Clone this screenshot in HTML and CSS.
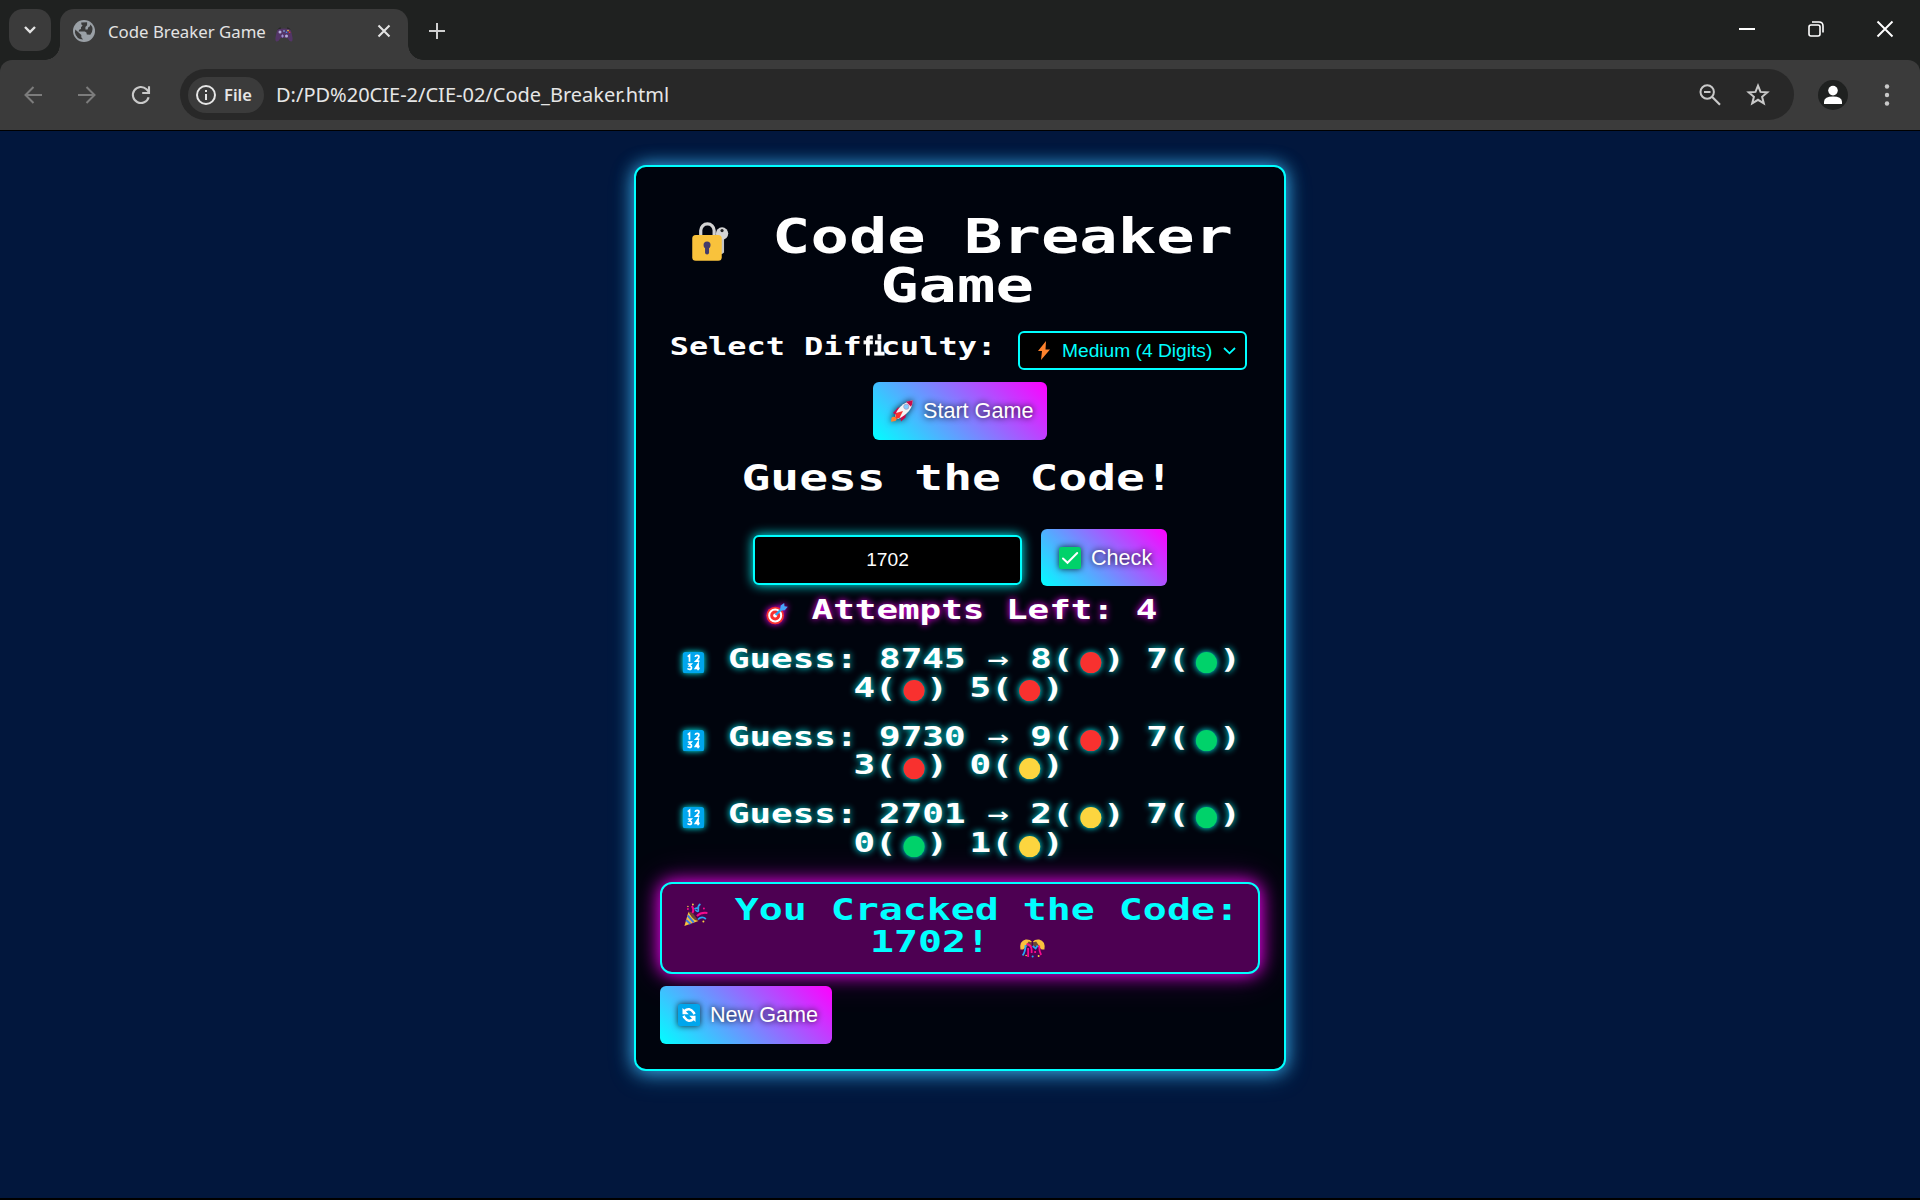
FILE: index.html
```html
<!DOCTYPE html>
<html lang="en">
<head>
<meta charset="utf-8">
<title>Code Breaker Game</title>
<link rel="stylesheet" href="styles.css">
</head>
<body>
<svg class="defs" width="0" height="0">
  <symbol id="red" viewBox="0 0 29.6 21.3" preserveAspectRatio="none"><circle cx="15" cy="10.65" r="10.6" fill="#f8312f"/></symbol>
  <symbol id="green" viewBox="0 0 29.6 21.3" preserveAspectRatio="none"><circle cx="15" cy="10.65" r="10.6" fill="#00d26a"/></symbol>
  <symbol id="yellow" viewBox="0 0 29.6 21.3" preserveAspectRatio="none"><circle cx="15" cy="10.65" r="10.6" fill="#fcd53f"/></symbol>
  <symbol id="numbers" viewBox="0 0 29.6 21.3" preserveAspectRatio="none">
    <rect x="4.3" width="21.3" height="21.3" rx="2.6" fill="#00a6ed"/>
    <g fill="none" stroke="#fff" stroke-width="1.7"><path d="M9.2 4.6 11 3.2v6.600M16.700 4.800q.3-1.400 1.900-1.400 1.900 0 1.900 1.600 0 1-1.600 2.600l-1.500 1.500h3.500M9.300 12h3.400l-1.700 2q2 0 2 1.700t-2 1.700q-1.400 0-1.900-1M19.600 18.200v-6l-2.700 4.200h4.300"/></g>
  </symbol>
</svg>

<header class="browser">
  <div class="tabstrip">
    <button class="tab-search"><svg width="14" height="10" viewBox="0 0 14 10"><path d="M2 2l5 5 5-5" fill="none" stroke="#e3e3e3" stroke-width="2.4"/></svg></button>
    <div class="tab">
      <svg class="globe" width="22" height="22" viewBox="0 0 22 22"><circle cx="11" cy="11" r="11" fill="#9aa0a6"/><path d="M2.3 9.5l6 5.5v2.2l1.8 2.3q-7-.5-8.2-7zM8.2 2.6q-.3 2.3 1.400 3L8 7.200v1.900q-2.600.3-2.400 2.400h6.200q2.200.4 2 3l3.500.2q4.500-6 .2-10.300-.4 2.500-2.200 2.900l-.7 2.200-2.200-.1V6.900l1.700-1.600V2.200z" fill="#3b3b3b"/></svg>
      <span class="tab-title">Code Breaker Game</span>
      <svg class="pad" width="18" height="15" viewBox="0 0 18 15"><path d="M3.5 2Q9 .8 14.500 2 16 2.300 17 8q1.400 6-.5 6.500-2 .3-4.100-3.500H5.600Q3.500 14.800 1.500 14.500-.4 14 1 8q1-5.700 2.500-6z" fill="#533566"/><path d="M3 2.500q.8-1.700 3-1.500M15 2.500q-.8-1.700-3-1.500" stroke="#222" fill="none"/><circle cx="5" cy="5" r="1.500" fill="#b4acd8"/><circle cx="11.500" cy="9" r="1.500" fill="#b4acd8"/><path d="M7.500 7.500v3M6 9h3" stroke="#9b8fd0"/><circle cx="9" cy="4" r=".8" fill="#8ec3f5"/><circle cx="13" cy="3.600" r=".8" fill="#fcd53f"/><circle cx="14.600" cy="5.200" r=".8" fill="#f8312f"/><circle cx="11.500" cy="5.200" r=".8" fill="#3f8cfe"/></svg>
      <svg class="tab-close" width="14" height="14" viewBox="0 0 14 14"><path d="M1.500 1.500l11 11m0-11l-11 11" stroke="#e3e3e3" stroke-width="2.100"/></svg>
    </div>
    <svg class="new-tab" width="16" height="16" viewBox="0 0 16 16"><path d="M8 0v16M0 8h16" stroke="#d0d0d0" stroke-width="2"/></svg>
    <div class="window-buttons">
      <svg width="16" height="16" viewBox="0 0 16 16"><path d="M0 8h16" stroke="#fff" stroke-width="2"/></svg>
      <svg width="16" height="16" viewBox="0 0 16 16"><rect x="1" y="4" width="11" height="11" rx="2" fill="none" stroke="#fff" stroke-width="1.600"/><path d="M4 1h7q4 0 4 4v6.500" fill="none" stroke="#fff" stroke-width="1.600"/></svg>
      <svg width="16" height="16" viewBox="0 0 16 16"><path d="M.5.5l15 15m0-15l-15 15" stroke="#fff" stroke-width="1.900"/></svg>
    </div>
  </div>
  <div class="toolbar">
    <div class="nav">
      <svg width="18" height="18" viewBox="0 0 18 18"><path d="M18 9H1.500M9.500 1L1.500 9l8 8" fill="none" stroke="#7c7c7c" stroke-width="2"/></svg>
      <svg width="18" height="18" viewBox="0 0 18 18"><path d="M0 9h16.500M8.500 1l8 8-8 8" fill="none" stroke="#7c7c7c" stroke-width="2"/></svg>
      <svg width="18" height="18" viewBox="0 0 18 18"><path d="M16.600 11.200A8 8 0 1 1 14.500 3.300L17 6" fill="none" stroke="#c9c9c9" stroke-width="2.100"/><path d="M17 .3V7h-6.800" fill="none" stroke="#c9c9c9" stroke-width="2.100"/></svg>
    </div>
    <div class="omnibox">
      <div class="chip"><svg width="20" height="20" viewBox="0 0 20 20"><circle cx="10" cy="10" r="9" fill="none" stroke="#e6e6e6" stroke-width="2"/><path d="M10 9v6M10 5v2" stroke="#e6e6e6" stroke-width="2"/></svg><span>File</span></div>
      <span class="url">D:/PD%20CIE-2/CIE-02/Code_Breaker.html</span>
      <svg class="magnify" width="22" height="22" viewBox="0 0 22 22"><circle cx="8.200" cy="8" r="6.700" fill="none" stroke="#c9c9c9" stroke-width="2"/><path d="M5 8h6.500M13 12.800l8 8" stroke="#c9c9c9" stroke-width="2.200"/></svg>
      <svg class="star" width="24" height="23" viewBox="0 0 24 23"><path d="M12 2.600l2.500 6.300 6.800.5-5.200 4.400 1.700 6.600-5.800-3.600-5.800 3.600 1.700-6.600L2.700 9.400l6.800-.5z" fill="none" stroke="#c9c9c9" stroke-width="2"/></svg>
    </div>
    <svg class="profile" width="30" height="30" viewBox="0 0 30 30"><circle cx="15" cy="15" r="15" fill="#1f2120"/><circle cx="15" cy="10.600" r="4.800" fill="#fff"/><path d="M6 24v-2.500Q6.500 16.500 15 16.500t9 5V24z" fill="#fff"/></svg>
    <svg class="dots" width="6" height="22" viewBox="0 0 6 22"><g fill="#c9c9c9"><circle cx="3" cy="2.500" r="2.200"/><circle cx="3" cy="11" r="2.200"/><circle cx="3" cy="19.500" r="2.200"/></g></svg>
  </div>
</header>

<main class="page">
  <section class="card">
    <h1 class="pixel title"><svg class="emo" viewBox="0 0 52.600 37.800" preserveAspectRatio="none"><path d="M16.500 14V7.500a6.700 6.700 0 0 1 13.400 0V14" fill="none" stroke="#d3d3d3" stroke-width="3.200"/><path d="M35.500 12v18l2 1.200 2.300-1.700V12z" fill="#c4c4c4"/><circle cx="37.800" cy="10.500" r="6.200" fill="#d3d3d3"/><circle cx="37.800" cy="7.500" r="1.600" fill="#222"/><rect x="8" y="12" width="29.500" height="25.600" rx="3.500" fill="#f9c23c"/><circle cx="22.800" cy="22" r="3.500" fill="#433b6b"/><rect x="20.800" y="22" width="4" height="9.500" rx="2" fill="#433b6b"/></svg> Code Breaker<br>Game</h1>

    <div class="difficulty">
      <label class="pixel label">Select Dif<span class="lig">fi</span>culty:</label>
      <div class="select">
        <svg width="12" height="19" viewBox="0 0 12 19"><path d="M8 0L0 10h4L3 19l9-10.500H7.500z" fill="#ff822d"/></svg>
        <span>Medium (4 Digits)</span>
        <svg class="chev" width="13" height="8" viewBox="0 0 13 8"><path d="M1 1l5.500 5.300L12 1" fill="none" stroke="#0ff" stroke-width="1.800"/></svg>
      </div>
    </div>

    <button class="btn start"><svg width="22" height="22" viewBox="0 0 22 22"><path d="M2 13l5-5.500 4 .5-6 7zM9 16l6-6-.5 7.500-4.500 4z" fill="#ca0b4a"/><path d="M4 16.500Q7 4 21.500.3 22 12 7 19z" fill="#f4f4f4"/><path d="M15 1.800L21.700.3q0 3.600-1.700 6.500z" fill="#ca0b4a"/><path d="M5 13l7-2-3.500 7-4.500 1z" fill="#f8312f"/><circle cx="15.300" cy="6.700" r="2.600" fill="#83cbff" stroke="#b39bc0" stroke-width=".8"/><path d="M0 21.700l.5-4q2-2 4.500-.2 1.500 2-.7 3.500z" fill="#ff822d"/></svg><span>Start Game</span></button>

    <h2 class="pixel prompt">Guess the Code!</h2>

    <div class="entry">
      <div class="field">1702</div>
      <button class="btn check"><svg width="22" height="22" viewBox="0 0 22 22"><rect width="22" height="22" rx="2.600" fill="#00d26a"/><path d="M4 11.500l4.500 4.300L18.200 6" fill="none" stroke="#fff" stroke-width="2" stroke-linecap="round"/></svg><span>Check</span></button>
    </div>

    <p class="pixel attempts"><svg class="emo" viewBox="0 0 29.600 21.300" preserveAspectRatio="none"><circle cx="13" cy="12.500" r="8.800" fill="#f8312f"/><circle cx="13" cy="12.500" r="6" fill="none" stroke="#fff" stroke-width="2"/><circle cx="13" cy="12.500" r="2" fill="#fff"/><path d="M13.500 12l8-8" stroke="#26a9f4" stroke-width="2.400"/><path d="M18 6.500l.5-4L22 0l.3 3.300 3.300.5-3 3.400-3.600.3z" fill="#46a4fb"/></svg> Attempts Left: 4</p>

    <div class="history">
      <p class="pixel guess"><svg class="emo"><use href="#numbers"/></svg> Guess: 8745 <span class="arrow">→</span> 8(<svg class="emo"><use href="#red"/></svg>) 7(<svg class="emo"><use href="#green"/></svg>)<br>4(<svg class="emo"><use href="#red"/></svg>) 5(<svg class="emo"><use href="#red"/></svg>)</p>
      <p class="pixel guess"><svg class="emo"><use href="#numbers"/></svg> Guess: 9730 <span class="arrow">→</span> 9(<svg class="emo"><use href="#red"/></svg>) 7(<svg class="emo"><use href="#green"/></svg>)<br>3(<svg class="emo"><use href="#red"/></svg>) 0(<svg class="emo"><use href="#yellow"/></svg>)</p>
      <p class="pixel guess"><svg class="emo"><use href="#numbers"/></svg> Guess: 2701 <span class="arrow">→</span> 2(<svg class="emo"><use href="#yellow"/></svg>) 7(<svg class="emo"><use href="#green"/></svg>)<br>0(<svg class="emo"><use href="#green"/></svg>) 1(<svg class="emo"><use href="#yellow"/></svg>)</p>
    </div>

    <div class="win">
      <p class="pixel message"><svg class="emo" viewBox="0 0 32.900 23.700" preserveAspectRatio="none"><path d="M8.500 9L4.500 23l14-5z" fill="#f9c23c"/><path d="M7.800 12.500l6 7M6.200 17l4.500 4" stroke="#3f7be0" stroke-width="2"/><path d="M8.300 8.500q4 .5 6.500 4.200t3.800 5.400q-4-.5-6.600-3.900T8.300 8.500" fill="#6d4534"/><path d="M12.500 10q2-3-.5-7M17 13q4-4 10.500-3" stroke="#f70a8d" stroke-width="2" fill="none"/><path d="M14.500 6q4-2 4 1t-3 0M20.500 1q-3 2-2 5M18 16.500q4-4 8-.5" stroke="#26a9f4" stroke-width="1.700" fill="none"/><g fill="#fcd53f"><circle cx="13" cy="1.500" r=".9"/><circle cx="23.500" cy="18.500" r="1"/><circle cx="8" cy="3.500" r=".7"/></g><g fill="#f70a8d"><circle cx="8" cy="6" r="1"/><circle cx="24" cy="5.500" r="1"/><circle cx="20" cy="11" r=".8"/></g></svg> You Cracked the Code:<br>1702! <svg class="emo" viewBox="0 0 32.900 23.700" preserveAspectRatio="none"><path d="M4.300 14.500Q3 6 9.500 4.500q4.500-.4 6.300 2.300L7 14.500zM28.300 14.500Q29.600 6 23 4.500q-4.500-.4-6.300 2.300l8.800 7.700z" fill="#f9c23c"/><path d="M9.500 11l3-4.500 3 1v4zM23 11l-3-4.500-3 1v4z" fill="#6d4534"/><path d="M9.500 10q-.3 7-3 10.500M16.500 11l3 2.500 2-3" stroke="#26a9f4" stroke-width="1.800" fill="none"/><path d="M10.500 9q5 1 5 6v3M12 13v9M23 10.500q0 6 2 9.500M19 16v2" stroke="#f70a8d" stroke-width="1.800" fill="none"/><g fill="#fcd53f"><circle cx="22.500" cy="21" r="1"/><circle cx="10" cy="20.500" r=".8"/></g><circle cx="16.500" cy="21.500" r="1" fill="#26a9f4"/></svg></p>
    </div>

    <button class="btn again"><svg width="22" height="22" viewBox="0 0 22 22"><rect width="22" height="22" rx="2.600" fill="#00a6ed"/><path d="M6.300 7.200q5-4.500 9.500 1.500l.6 1.500M15.700 14.800q-5 4.500-9.500-1.500l-.6-1.500" fill="none" stroke="#fff" stroke-width="2.500"/><path d="M4.500 4v6.300h6.300zM17.500 18v-6.300h-6.300z" fill="#fff"/></svg><span>New Game</span></button>
  </section>
</main>
</body>
</html>
```
FILE: styles.css
```css
* { box-sizing: border-box; }
body {
  margin: 0;
  height: 1200px;
  overflow: hidden;
  background: #02173d;
  border-bottom: 2px solid #000;
  color: #fff;
  font-family: "Liberation Sans", Arial, sans-serif;
}
svg { display: block; flex: none; overflow: visible; }
.defs { position: absolute; }
button { border: 0; padding: 0; font: inherit; color: inherit; }
h1, h2, p { margin: 0; }

/* browser frame */
.browser { font-family: "Noto Sans", sans-serif; border-bottom: 1px solid #000; background: #1f2120; }
.tabstrip { height: 60px; display: flex; align-items: flex-start; background: #1f2120; }
.tab-search {
  width: 42px; height: 42px; margin: 9px 9px 0 9px;
  border-radius: 14px; background: #3b3b3b;
  display: flex; align-items: center; justify-content: center;
}
.tab {
  position: relative;
  width: 348px; height: 51px; margin-top: 9px; padding: 0 17px 7px 13px;
  border-radius: 14px 14px 0 0; background: #3b3b3b;
  display: flex; align-items: center;
}
.tab::before, .tab::after {
  content: ""; position: absolute; bottom: 0; width: 15px; height: 15px;
}
.tab::before { left: -15px; background: radial-gradient(circle at 0 0, transparent 14.500px, #3b3b3b 15px); }
.tab::after { right: -15px; background: radial-gradient(circle at 100% 0, transparent 14.500px, #3b3b3b 15px); }
.globe { margin-top: -1px; }
.tab-title { margin: 0 9px 0 13px; width: 158px; font-size: 16.800px; white-space: nowrap; color: #e3e3e3; }
.pad { margin-top: 6px; }
.tab-close { margin-left: auto; margin-top: -1px; }
.new-tab { margin: 23px 0 0 21px; }
.window-buttons { margin: 21px 27px 0 auto; display: flex; gap: 53px; }
.toolbar {
  height: 70px; padding: 0 30px 1px 24px; background: #3b3b3b;
  border-radius: 12px 12px 0 0; display: flex; align-items: center;
}
.nav { display: flex; gap: 36px; width: 156px; }
.omnibox {
  flex: none; width: 1614px; height: 51px; padding: 0 24px 0 8px;
  border-radius: 26px; background: #282828; display: flex; align-items: center;
}
.chip {
  width: 76px; height: 36px; padding-left: 8px; border-radius: 18px; background: #3b3b3b;
  display: flex; align-items: center; gap: 8px;
  font-size: 16.500px; font-weight: 600; color: #e6e6e6;
}
.url { margin-left: 12px; font-size: 20px; color: #e6e6e6; white-space: nowrap; }
.magnify { margin-left: auto; margin-right: 25px; }
.profile { margin-left: 24px; }
.dots { margin-left: auto; }

/* game */
.page { display: flex; justify-content: center; padding-top: 34px; }
.card {
  width: 652px; height: 906px; padding: 45px 24px 0;
  border: 2px solid #0ff; border-radius: 12px; background: #00040d;
  box-shadow: 0 0 18px rgba(60, 190, 255, .85), 0 5px 24px rgba(60, 190, 255, .35);
  display: flex; flex-direction: column; align-items: center;
}
/* wide arcade lettering: one cell is 0.8em after stretching */
.pixel {
  font-family: "DejaVu Sans Mono", monospace;
  font-weight: 700; white-space: nowrap; text-align: center;
  transform: translateX(-.055em) scaleX(1.329);
  font-variant-ligatures: none;
}
.emo { display: inline-block; width: .825em; height: .79em; vertical-align: -.195em; transform: translateX(.05em); }
.title { font-size: 48px; line-height: 48px; height: 97px; }
.title .emo { vertical-align: -.17em; }
.difficulty { display: flex; align-items: flex-start; width: 578px; margin-top: 22px; }
.label { font-size: 24px; line-height: 32px; transform-origin: 0 50%; width: 347px; text-align: left; }
.lig { display: inline-block; width: .602em; transform: scaleX(.58); transform-origin: 0 50%; -webkit-text-stroke: .05em #fff; }
.select {
  flex: none; width: 229px; height: 39px; padding: 0 9px 0 18px;
  border: 2px solid #0ff; border-radius: 6px; background: #000; color: #0ff;
  display: flex; align-items: center; font-size: 19.200px; white-space: nowrap;
}
.select span { margin-left: 12px; }
.chev { margin-left: auto; }
.btn {
  height: 58px; padding: 0 14px 0 18px; border-radius: 6px;
  background: linear-gradient(45deg, #0ff, #f0f);
  display: flex; align-items: center; gap: 10px; flex: none;
  font-size: 21.600px; white-space: nowrap;
  text-shadow: 0 0 6px #000;
}
.btn svg { filter: drop-shadow(0 0 3px rgba(0, 0, 0, .8)); }
.start { width: 174px; margin-top: 12px; }
.prompt { font-size: 36px; line-height: 36px; margin-top: 20px; }
.entry { display: flex; align-items: flex-start; margin-top: 33px; width: 414px; height: 58px; justify-content: space-between; flex: none; }
.field {
  width: 269px; height: 50px; margin-top: 6px; border: 2px solid #0ff; border-radius: 6px;
  background: #000; box-shadow: 0 0 12px #0ff; font-size: 19.200px; line-height: 45px; text-align: center;
}
.check { width: 126px; height: 57px; }
.attempts { font-size: 27px; line-height: 28px; margin-top: 9px; text-shadow: 0 0 6px #f0f; }
.attempts .emo { filter: drop-shadow(0 0 3px #f0f); }
.history { margin-top: 21px; display: flex; flex-direction: column; gap: 21.600px; }
.guess { font-size: 27px; line-height: 28px; height: 56px; text-shadow: 0 0 6px #0ff; }
.guess .emo { filter: drop-shadow(0 0 3px #0ff); }
.arrow { display: inline-block; width: .602em; font-weight: 400; font-size: 1em; }
.win {
  width: 600px; height: 92px; margin-top: 26px; padding-top: 10px;
  border: 2px solid #0ff; border-radius: 12px; background: #4d0052;
  box-shadow: 0 0 18px #f0f, 0 0 36px rgba(255, 0, 255, .25); display: flex; justify-content: center; flex: none;
}
.message { font-size: 30px; line-height: 32px; color: #0ff; }
.again { width: 172px; margin-top: 12px; align-self: flex-start; }
```
